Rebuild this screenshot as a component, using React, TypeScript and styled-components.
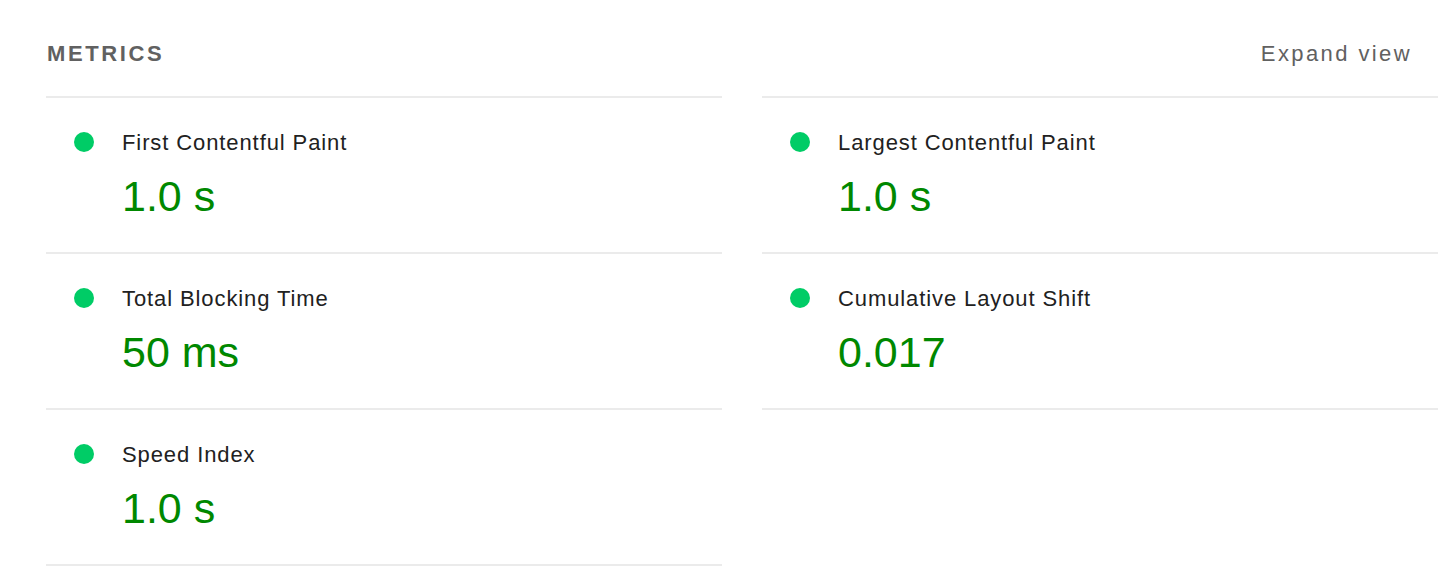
import React from 'react'
import styled, { createGlobalStyle } from 'styled-components'

type Metric = {
    id: string
    title: string
    value: string
}

const metrics: Array<Metric> = [
    { id: 'fcp', title: 'First Contentful Paint', value: '1.0 s' },
    { id: 'lcp', title: 'Largest Contentful Paint', value: '1.0 s' },
    { id: 'tbt', title: 'Total Blocking Time', value: '50 ms' },
    { id: 'cls', title: 'Cumulative Layout Shift', value: '0.017' },
    { id: 'si', title: 'Speed Index', value: '1.0 s' }
]

const GlobalStyle = createGlobalStyle`
    html, body {
        margin: 0;
        padding: 0;
        background: #fff;
    }

    body {
        font-family: "Liberation Sans", Arial, Helvetica, sans-serif;
        -webkit-font-smoothing: antialiased;
    }
`

export default function App() {
    return (
        <>
            <GlobalStyle />
            <Section>
                <Header>
                    <SectionTitle>Metrics</SectionTitle>
                    <ToggleLabel>Expand view</ToggleLabel>
                </Header>
                <MetricGrid>
                    {metrics.map(metric => (
                        <MetricItem key={metric.id}>
                            <PassDot />
                            <MetricBody>
                                <MetricTitle>{metric.title}</MetricTitle>
                                <MetricValue>{metric.value}</MetricValue>
                            </MetricBody>
                        </MetricItem>
                    ))}
                </MetricGrid>
            </Section>
        </>
    )
}

const Section = styled.div`
    width: 1392px;
    padding-left: 46px;
`

const Header = styled.div`
    display: flex;
    justify-content: space-between;
    align-items: baseline;
    padding: 39px 26px 27px 1px;
    line-height: 30px;
`

const SectionTitle = styled.div`
    font-size: 22px;
    font-weight: bold;
    letter-spacing: 2.6px;
    text-transform: uppercase;
    color: #616161;
`

const ToggleLabel = styled.div`
    font-size: 22px;
    letter-spacing: 2.4px;
    color: #616161;
    cursor: pointer;
`

const MetricGrid = styled.div`
    display: grid;
    grid-template-columns: 1fr 1fr;
    column-gap: 40px;
`

const MetricItem = styled.div`
    display: flex;
    align-items: flex-start;
    gap: 28px;
    padding: 30px 0 30px 28px;
    border-bottom: 2px solid #ebebeb;

    &:nth-child(-n + 2) {
        border-top: 2px solid #ebebeb;
    }
`

const PassDot = styled.span`
    flex: none;
    width: 20px;
    height: 20px;
    margin-top: 4px;
    border-radius: 50%;
    background: #0c6;
`

const MetricBody = styled.div`
    display: flex;
    flex-direction: column;
    gap: 12px;
`

const MetricTitle = styled.div`
    font-size: 22px;
    line-height: 30px;
    letter-spacing: 0.9px;
    color: #212121;
`

const MetricValue = styled.div`
    font-size: 43px;
    line-height: 52px;
    color: #080;
`
